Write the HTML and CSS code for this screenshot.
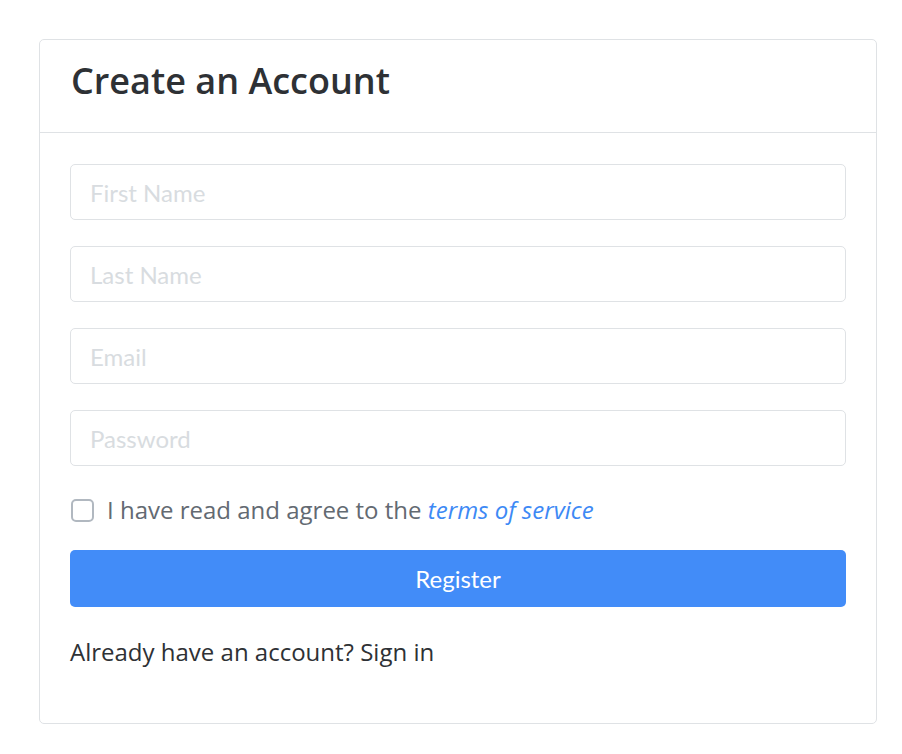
FILE: index.html
```html
<!DOCTYPE html>
<html lang="en">
<head>
    <meta charset="UTF-8">
    <meta name="viewport" content="width=device-width, initial-scale=1.0">
    <title>Create an Account</title>
    <link rel="stylesheet" href="styles.css">
</head>
<body>
    <div class="card">
        <div class="card-header">
            <h1>Create an Account</h1>
        </div>
        <div class="card-body">
            <form id="registerForm">
                <input type="text" name="first" placeholder="First Name">
                <input type="text" name="last" placeholder="Last Name">
                <input type="email" name="email" placeholder="Email">
                <input type="password" name="password" placeholder="Password">
                <label class="agree">
                    <input type="checkbox" name="terms">
                    <span>I have read and agree to the <a href="#terms">terms of service</a></span>
                </label>
                <button type="submit">Register</button>
            </form>
            <p class="signin">Already have an account? Sign in</p>
        </div>
    </div>
</body>
</html>
```
FILE: styles.css
```css
body {
    margin: 0;
    padding: 0;
    font-family: "Open Sans", sans-serif;
    background-color: #fff;
}

.card {
    width: 838px;
    margin: 39px 0 0 39px;
    border: 1px solid #dfe2e5;
    border-radius: 5px;
    box-sizing: border-box;
}

.card-header {
    height: 93px;
    padding: 0 31px 11px;
    border-bottom: 1px solid #dfe2e5;
    display: flex;
    align-items: center;
    box-sizing: border-box;
}

.card-header h1 {
    margin: 0;
    font-size: 36px;
    font-weight: 600;
    color: #2e3135;
}

.card-body {
    padding: 31px 30px 30px;
}

#registerForm {
    display: flex;
    flex-direction: column;
}

#registerForm input[type="text"],
#registerForm input[type="email"],
#registerForm input[type="password"] {
    height: 56px;
    margin-bottom: 26px;
    padding: 0 19px;
    border: 1px solid #dfe2e5;
    border-radius: 5px;
    font-family: Lato, sans-serif;
    font-size: 24px;
    color: #333;
    box-sizing: border-box;
}

#registerForm input::placeholder {
    color: #d8dce0;
}

.agree {
    display: flex;
    align-items: center;
    margin-top: 3px;
    line-height: 30px;
    font-size: 24px;
    color: #636a72;
}

.agree input {
    appearance: none;
    width: 23px;
    height: 23px;
    margin: 0 13px 0 1px;
    border: 2px solid #b1b8c0;
    border-radius: 5px;
    box-sizing: border-box;
}

.agree a {
    color: #3d89f5;
    font-style: italic;
    text-decoration: none;
}

#registerForm button {
    height: 57px;
    margin-top: 25px;
    border: none;
    border-radius: 5px;
    background-color: #428cf8;
    color: white;
    font-family: Lato, sans-serif;
    font-size: 24px;
    cursor: pointer;
}

.signin {
    margin: 30px 0 26px;
    line-height: 30px;
    font-size: 24px;
    color: #2e3135;
}
```
